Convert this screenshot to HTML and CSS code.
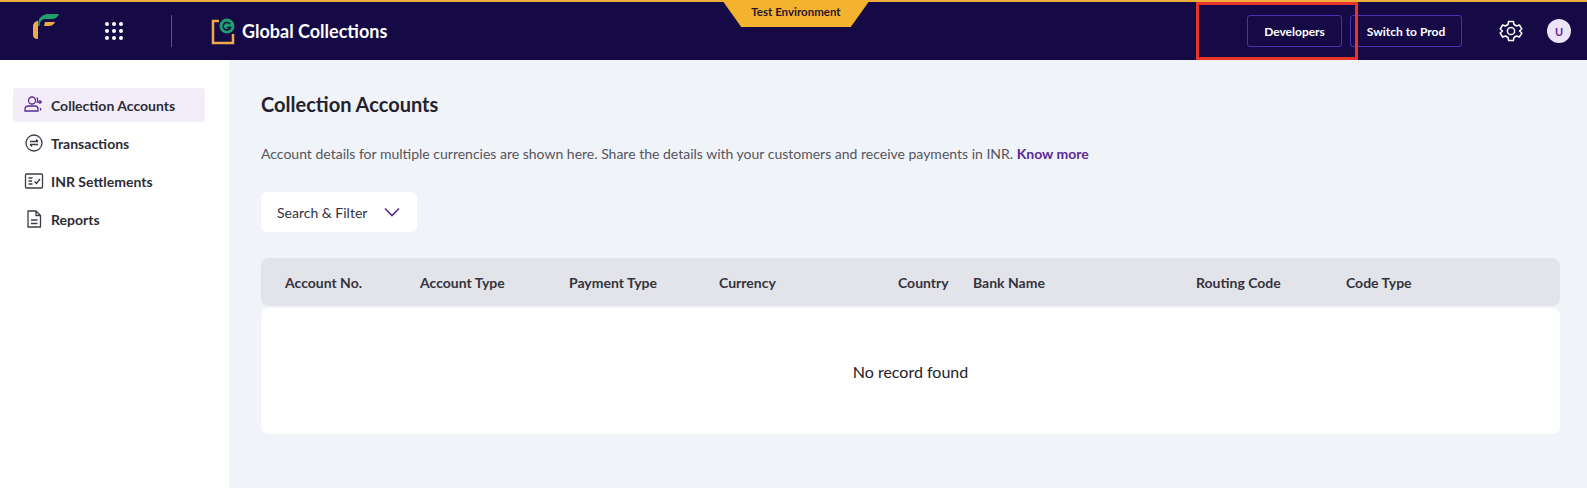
FILE: index.html
```html
<!DOCTYPE html>
<html lang="en">
<head>
    <meta charset="UTF-8">
    <title>Global Collections</title>
    <link rel="stylesheet" href="styles.css">
</head>
<body>
    <header class="topbar">
        <svg class="logo" width="28" height="28" viewBox="0 0 28 28">
            <path d="M1 13 Q1 9 6 7.500 V26 Q1 26 1 22 Z" fill="#eda94a"/>
            <path d="M6 13 Q6 2 15 1 H27 Q25 6 20 6 H13 Q8 6 7.500 13 Z" fill="#1f9e6e"/>
            <path d="M13 9 H23 Q21 13 17 13 H12 Z" fill="#eda94a"/>
        </svg>
        <svg class="apps" width="20" height="20" viewBox="0 0 20 20" fill="#fff">
            <circle cx="3" cy="3" r="2"/><circle cx="10" cy="3" r="2"/><circle cx="17" cy="3" r="2"/>
            <circle cx="3" cy="10" r="2"/><circle cx="10" cy="10" r="2"/><circle cx="17" cy="10" r="2"/>
            <circle cx="3" cy="17" r="2"/><circle cx="10" cy="17" r="2"/><circle cx="17" cy="17" r="2"/>
        </svg>
        <span class="divider"></span>
        <svg class="product" width="24" height="28" viewBox="0 0 24 28">
            <path d="M8 4 H2 V26 H22 V17" fill="none" stroke="#eda94a" stroke-width="2.500"/>
            <circle cx="16" cy="9" r="7.500" fill="#1f9e6e"/>
            <path d="M19 7 A3.800 3.800 0 1 0 19.500 10.500 H16" fill="none" stroke="#150a45" stroke-width="1.500"/>
        </svg>
        <span class="product-name">Global Collections</span>
        <div class="topbar-right">
            <button class="top-btn btn-dev">Developers</button>
            <button class="top-btn btn-prod">Switch to Prod</button>
            <svg class="gear" width="24" height="24" viewBox="0 0 24 24" fill="none" stroke="#fff" stroke-width="1.500" stroke-linejoin="round">
                <path d="M9.600 2.500 H14.400 L15 5.500 L17.500 7 L20.400 6 L22.800 10 L20.500 12 L22.800 14 L20.400 18 L17.500 17 L15 18.500 L14.400 21.500 H9.600 L9 18.500 L6.500 17 L3.600 18 L1.200 14 L3.500 12 L1.200 10 L3.600 6 L6.500 7 L9 5.500 Z"/>
                <circle cx="12" cy="12" r="3.600"/>
            </svg>
            <span class="avatar">U</span>
        </div>
        <div class="env-tab">Test Environment</div>
        <div class="mark-box"></div>
    </header>

    <div class="layout">
        <nav class="sidebar">
            <a class="nav-item active">
                <svg width="20" height="20" viewBox="0 0 20 20" fill="none" stroke="#5b2a94" stroke-width="1.300">
                    <circle cx="8" cy="5.500" r="3.500"/>
                    <path d="M1 16 V14 Q1 11 5 11 H11 Q14 11 14 14 V16 Z"/>
                    <path d="M16 5 V9 M14 7 H18 M13 2.500 Q14.500 5 13 8 M16.500 13 V15.500"/>
                </svg>
                Collection Accounts
            </a>
            <a class="nav-item">
                <svg width="20" height="20" viewBox="0 0 20 20" fill="none" stroke="#3c3c46" stroke-width="1.300">
                    <circle cx="10" cy="10" r="8"/>
                    <path d="M6 11.500 H14 M6 11.500 L8 13.500 M14 8.500 H6 M14 8.500 L12 6.500"/>
                </svg>
                Transactions
            </a>
            <a class="nav-item">
                <svg width="20" height="20" viewBox="0 0 20 20" fill="none" stroke="#3c3c46" stroke-width="1.300">
                    <rect x="1.500" y="3" width="17" height="14" rx="1"/>
                    <path d="M4.500 7 H8.500 M4.500 10 H8 M4.500 13 H8.500 M10.500 10.500 L12.500 12.500 L16 8"/>
                </svg>
                INR Settlements
            </a>
            <a class="nav-item">
                <svg width="20" height="20" viewBox="0 0 20 20" fill="none" stroke="#3c3c46" stroke-width="1.300" stroke-linejoin="round">
                    <path d="M4 2 H12 L16.500 6.500 V18 H4 Z M12 2 V6.500 H16.500"/>
                    <path d="M7 11 H13.500 M7 14.500 H13.500"/>
                </svg>
                Reports
            </a>
        </nav>

        <main class="content">
            <h1 class="page-title">Collection Accounts</h1>
            <p class="page-desc">Account details for multiple currencies are shown here. Share the details with your customers and receive payments in INR. <a class="know-more">Know more</a></p>
            <button class="filter-btn">
                Search &amp; Filter
                <svg width="16" height="10" viewBox="0 0 16 10" fill="none" stroke="#5b2a84" stroke-width="1.600"><path d="M1 1.500 L8 8.500 L15 1.500"/></svg>
            </button>
            <div class="table-head">
                <span class="col-no">Account No.</span>
                <span class="col-type">Account Type</span>
                <span class="col-pay">Payment Type</span>
                <span class="col-cur">Currency</span>
                <span class="col-country">Country</span>
                <span class="col-bank">Bank Name</span>
                <span class="col-route">Routing Code</span>
                <span class="col-code">Code Type</span>
            </div>
            <div class="table-body">No record found</div>
        </main>
    </div>
</body>
</html>
```

FILE: styles.css
```css
* {
    box-sizing: border-box;
}
body {
    margin: 0;
    height: 488px;
    overflow: hidden;
    font-family: 'Lato', sans-serif;
    color: #22222c;
    background: #fff;
}
.topbar {
    position: relative;
    display: flex;
    align-items: center;
    height: 60px;
    padding-left: 32px;
    background: #150a45;
    border-top: 2px solid #f0ae3c;
}
.logo {
    margin-top: -8px;
}
.apps {
    margin-left: 44px;
}
.divider {
    width: 1px;
    height: 32px;
    margin-left: 47px;
    background: #5f4f95;
}
.product {
    margin-left: 39px;
}
.product-name {
    margin-left: 7px;
    font-size: 18px;
    font-weight: 700;
    color: #fff;
}
.topbar-right {
    display: flex;
    align-items: center;
    margin-left: auto;
    padding-right: 16px;
}
.top-btn {
    height: 32px;
    border: 1px solid #4f2fb0;
    border-radius: 3px;
    background: transparent;
    color: #fff;
    font-family: inherit;
    font-size: 12px;
    font-weight: 700;
}
.btn-dev {
    width: 95px;
}
.btn-prod {
    width: 112px;
    margin-left: 8px;
}
.gear {
    margin-left: 37px;
}
.avatar {
    display: flex;
    align-items: center;
    justify-content: center;
    width: 24px;
    height: 24px;
    margin-left: 24px;
    border-radius: 50%;
    background: #ece3f8;
    color: #5b2a94;
    font-size: 11px;
    font-weight: 700;
}
.env-tab {
    position: absolute;
    top: -2px;
    left: 722px;
    width: 148px;
    height: 27px;
    padding-top: 5px;
    background: #f3b32e;
    clip-path: polygon(0 0, 100% 0, 87% 100%, 13% 100%);
    text-align: center;
    font-size: 11.500px;
    font-weight: 700;
    color: #2a1430;
}
.mark-box {
    position: absolute;
    top: 0;
    left: 1196px;
    width: 162px;
    height: 58px;
    border: 3px solid #e8352a;
}
.layout {
    display: flex;
    height: 428px;
}
.sidebar {
    width: 229px;
    padding: 28px 24px 0 13px;
    flex-shrink: 0;
}
.nav-item {
    display: flex;
    align-items: center;
    gap: 7px;
    height: 34px;
    margin-bottom: 4px;
    padding-left: 11px;
    border-radius: 3px;
    font-size: 14px;
    font-weight: 700;
    color: #2c2c36;
}
.nav-item.active {
    background: #f3edfa;
}
.content {
    flex: 1;
    padding: 30px 27px 0 32px;
    background: #f0f3f8;
}
.page-title {
    margin: 0;
    font-size: 20px;
    line-height: 28px;
    font-weight: 700;
}
.page-desc {
    margin: 26px 0 0;
    font-size: 14px;
    line-height: 20px;
    color: #55555f;
}
.know-more {
    color: #5b2a94;
    font-weight: 700;
}
.filter-btn {
    display: flex;
    align-items: center;
    justify-content: space-between;
    width: 156px;
    height: 40px;
    margin-top: 28px;
    padding: 0 17px 0 16px;
    border: none;
    border-radius: 6px;
    background: #fff;
    font-family: inherit;
    font-size: 14px;
    color: #33333d;
}
.table-head {
    display: grid;
    grid-template-columns: 135px 149px 150px 179px 75px 223px 150px 1fr;
    align-items: center;
    height: 48px;
    margin-top: 26px;
    padding-left: 24px;
    border-radius: 8px;
    background: #e3e4e9;
    font-size: 14px;
    font-weight: 700;
    color: #33333d;
}
.table-body {
    display: flex;
    align-items: center;
    justify-content: center;
    height: 126px;
    margin-top: 2px;
    border-radius: 8px;
    background: #fff;
    font-size: 16px;
    color: #22222c;
}
```
